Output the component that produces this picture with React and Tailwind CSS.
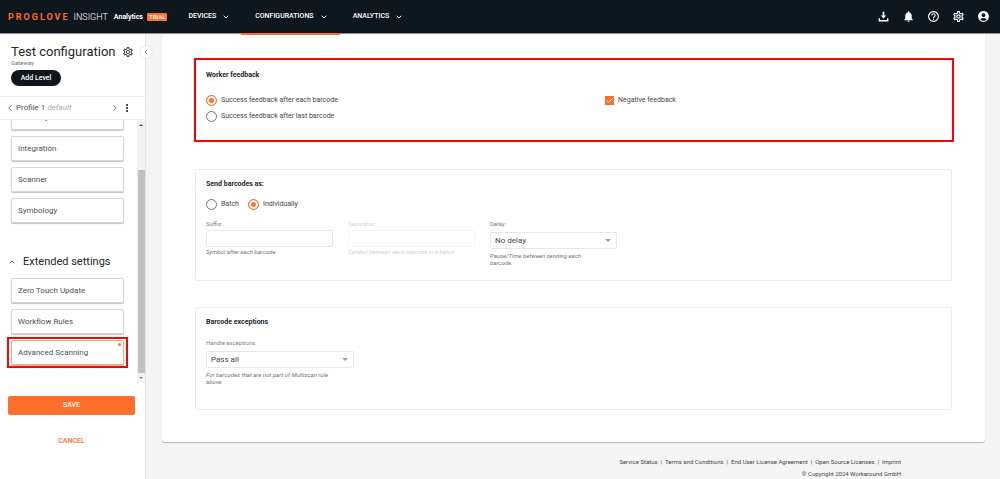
import { useState } from "react";
import {
  MdNotifications,
  MdHelpOutline,
  MdOutlineSettings,
  MdAccountCircle,
  MdMoreVert,
} from "react-icons/md";
import { FiChevronDown, FiChevronLeft, FiChevronRight, FiChevronUp } from "react-icons/fi";

const menus = ["DEVICES", "CONFIGURATIONS", "ANALYTICS"];
const baseSettings = ["Gateway", "Integration", "Scanner", "Symbology"];
const footerLinks = [
  "Service Status",
  "Terms and Conditions",
  "End User License Agreement",
  "Open Source Licenses",
  "Imprint",
];

function DownloadIcon() {
  return (
    <svg viewBox="0 0 24 24" className="size-[13px] fill-current">
      <path d="M10.5 3h3v7H17l-5 5.5L7 10h3.500z" />
      <path d="M3 15h2.500v3.500h13V15H21v6H3z" />
    </svg>
  );
}

function Header() {
  return (
    <header className="flex h-[34px] items-center border-b border-[#8b9096] bg-[#0e171e] pl-2 pr-[10px] text-white">
      <a href="#" className="flex items-center text-[9px] leading-3">
        <span className="font-bold tracking-[2px] text-[#ff6f2c]">PROGLOVE</span>
        <span className="ml-1 font-light">INSIGHT</span>
      </a>
      <span className="ml-[6px] text-[7px] font-bold leading-3">Analytics</span>
      <span className="ml-1 rounded-[1px] bg-[#ff6f2c] px-[2px] text-[6px] font-medium leading-2">TRIAL</span>
      <nav className="ml-[21px] flex h-full">
        {menus.map((menu) => (
          <button
            key={menu}
            type="button"
            className="relative mr-[25px] flex items-center gap-[6px] text-[7px] font-medium"
          >
            {menu}
            <FiChevronDown size={8} strokeWidth={3} />
            {menu === "CONFIGURATIONS" && (
              <span className="absolute -bottom-[2px] -left-[14px] -right-3 h-[2px] bg-[#ff6f2c]" />
            )}
          </button>
        ))}
      </nav>
      <div className="ml-auto flex items-center gap-3">
        <button type="button" aria-label="Downloads"><DownloadIcon /></button>
        <button type="button" aria-label="Notifications"><MdNotifications size={13} /></button>
        <button type="button" aria-label="Help"><MdHelpOutline size={13} /></button>
        <button type="button" aria-label="Settings"><MdOutlineSettings size={13} /></button>
        <button type="button" aria-label="Account"><MdAccountCircle size={13} /></button>
      </div>
    </header>
  );
}

function SettingCard({ label, active }) {
  return (
    <div className="relative">
      <button
        type="button"
        className={`block h-[25px] w-full rounded-[2px] border bg-white pl-[6px] text-left text-[8px] text-[#4b5157] shadow-[0_1px_1px_rgba(0,0,0,0.25)] ${
          active ? "border-[#f5a57c]" : "border-[#d4d6d8]"
        }`}
      >
        {label}
      </button>
      {active && (
        <>
          <span className="absolute right-[3px] top-[3px] size-[3px] rounded-full bg-[#ff6f2c]" />
          <span className="pointer-events-none absolute -inset-x-1 -inset-y-[3px] border-2 border-[#fe0000]" />
        </>
      )}
    </div>
  );
}

function Sidebar() {
  return (
    <aside className="relative flex w-[146px] shrink-0 flex-col border-r border-[#e3e3e3] bg-white">
      <div className="flex flex-col px-[11px] pt-[11px]">
        <div className="flex items-center justify-between">
          <h1 className="text-[13px] leading-[14px] text-[#20272d]">Test configuration</h1>
          <button type="button" aria-label="Configuration settings" className="text-[#3f464c]">
            <MdOutlineSettings size={12} />
          </button>
        </div>
        <span className="text-[6px] leading-2 text-[#6d7378]">Gateway</span>
        <button
          type="button"
          className="mt-[3px] h-4 w-[50px] rounded-full bg-[#0e171e] text-[7px] font-medium text-white"
        >
          Add Level
        </button>
      </div>
      <button
        type="button"
        aria-label="Collapse sidebar"
        className="absolute -right-[7px] top-3 flex size-3 items-center justify-center rounded-full bg-white text-[#3f464c] shadow-[0_0_1px_rgba(0,0,0,0.3)]"
      >
        <FiChevronLeft size={8} />
      </button>

      <div className="mt-[10px] flex h-6 items-center border-y border-[#ececec] pl-[5px] pr-3 text-[#4b5157]">
        <button type="button" aria-label="Previous profile"><FiChevronLeft size={10} /></button>
        <span className="ml-px text-[8px]">
          Profile 1 <i className="text-[#a5a9ac]">default</i>
        </span>
        <button type="button" aria-label="Next profile" className="ml-auto"><FiChevronRight size={10} /></button>
        <button type="button" aria-label="More" className="ml-px text-[#20272d]"><MdMoreVert size={12} /></button>
      </div>

      <div className="flex h-[263px] overflow-hidden">
        <div className="-mt-[15px] flex-1 pl-[11px] pr-[13px]">
          <div className="flex flex-col gap-[6px]">
            {baseSettings.map((label) => (
              <SettingCard key={label} label={label} />
            ))}
          </div>
          <h2 className="-ml-[3px] mb-2 mt-[31px] flex items-center gap-[7px] text-[11px] leading-4 text-[#20272d]">
            <FiChevronUp size={8} />
            Extended settings
          </h2>
          <div className="flex flex-col gap-[6px]">
            <SettingCard label="Zero Touch Update" />
            <SettingCard label="Workflow Rules" />
            <SettingCard label="Advanced Scanning" active />
          </div>
        </div>
        <div className="flex w-2 flex-col items-center bg-[#f1f1f1]">
          <svg viewBox="0 0 4 2" className="mb-11 mt-1 h-[2px] w-1 shrink-0 fill-[#505050]"><path d="M0 2L2 0l2 2z" /></svg>
          <div className="w-[7px] flex-1 bg-[#c1c1c1]" />
          <svg viewBox="0 0 4 2" className="my-1 h-[2px] w-1 shrink-0 fill-[#808080]"><path d="M0 0l2 2 2-2z" /></svg>
        </div>
      </div>

      <div className="mt-[13px] flex flex-col items-center gap-[19px] pl-2 pr-[10px]">
        <button type="submit" className="h-[19px] w-full rounded-[2px] bg-[#ff6f2c] text-[7px] font-medium text-white">
          SAVE
        </button>
        <button type="button" className="px-2 text-[7px] font-medium leading-[14px] text-[#ff6f2c]">
          CANCEL
        </button>
      </div>
    </aside>
  );
}

function Radio({ name, label, checked, onChange }) {
  return (
    <label className="flex items-center gap-1 text-[7px] leading-4 text-[#3f464c]">
      <input
        type="radio"
        name={name}
        checked={checked}
        onChange={onChange}
        className="size-[11px] appearance-none rounded-full border border-[#6d7378] bg-white checked:border-[#ff6f2c] checked:bg-[#ff6f2c] checked:shadow-[inset_0_0_0_2px_white]"
      />
      {label}
    </label>
  );
}

function SelectField({ id, label, hint, options, className }) {
  return (
    <div className={className}>
      <label htmlFor={id} className="block text-[6px] leading-2 text-[#7d8388]">{label}</label>
      <div className="relative mt-1">
        <select
          id={id}
          className="block h-[17px] w-full appearance-none rounded-[2px] border border-[#e6e7e8] bg-white pl-1 text-[8px] leading-[15px] text-[#3f464c]"
        >
          {options.map((option) => (
            <option key={option}>{option}</option>
          ))}
        </select>
        <svg viewBox="0 0 6 3" className="pointer-events-none absolute right-[6px] top-[7px] h-[3px] w-[6px] fill-[#9a9ea2]">
          <path d="M0 0h6L3 3z" />
        </svg>
      </div>
      <p className="mt-[3px] pr-5 text-[6px] italic leading-[7px] text-[#6d7378]">{hint}</p>
    </div>
  );
}

function TextField({ id, label, hint, disabled }) {
  return (
    <div className={`w-[127px] ${disabled ? "opacity-35" : ""}`}>
      <label htmlFor={id} className="block text-[6px] leading-2 text-[#7d8388]">{label}</label>
      <input
        id={id}
        type="text"
        disabled={disabled}
        className="mt-[2px] block h-[17px] w-full rounded-[2px] border border-[#e6e7e8] bg-white px-1 text-[8px]"
      />
      <p className="mt-px text-[6px] italic leading-2 text-[#6d7378]">{hint}</p>
    </div>
  );
}

export default function App() {
  const [feedback, setFeedback] = useState("each");
  const [sendAs, setSendAs] = useState("individually");
  const [negative, setNegative] = useState(true);

  return (
    <div className="flex min-h-screen flex-col bg-[#f4f4f4] font-[Roboto,sans-serif]">
      <Header />
      <div className="flex flex-1">
        <Sidebar />
        <div className="min-w-0 flex-1 pl-4 pr-[15px]">
          <main className="rounded-b-[3px] bg-white px-[33px] pb-8 pt-6 shadow-[0_1px_1px_rgba(0,0,0,0.25)]">
            <section className="-ml-px -mr-[2px] h-[84px] border-2 border-[#fe0000] px-[10px] pt-[11px]">
              <h3 className="text-[7px] font-bold leading-2 text-[#20272d]">Worker feedback</h3>
              <div className="mt-[13px] grid grid-cols-[399px_1fr] items-start">
                <div>
                  <Radio
                    name="feedback"
                    label="Success feedback after each barcode"
                    checked={feedback === "each"}
                    onChange={() => setFeedback("each")}
                  />
                  <Radio
                    name="feedback"
                    label="Success feedback after last barcode"
                    checked={feedback === "last"}
                    onChange={() => setFeedback("last")}
                  />
                </div>
                <label className="flex items-center gap-1 text-[7px] leading-4 text-[#3f464c]">
                  <span className="grid size-[9px]">
                    <input
                      type="checkbox"
                      checked={negative}
                      onChange={(e) => setNegative(e.target.checked)}
                      className="col-start-1 row-start-1 size-[9px] appearance-none border border-[#6d7378] checked:border-[#ff6f2c] checked:bg-[#ff6f2c]"
                    />
                    <svg viewBox="0 0 9 9" className="pointer-events-none col-start-1 row-start-1 fill-none stroke-white">
                      <path d="M1.8 4.6l1.8 1.8 3.6-3.6" />
                    </svg>
                  </span>
                  Negative feedback
                </label>
              </div>
            </section>

            <section className="mt-[27px] h-[112px] rounded-[2px] border border-[#ececec] px-[10px] pt-[10px]">
              <h3 className="text-[7px] font-bold leading-2 text-[#20272d]">Send barcodes as:</h3>
              <div className="mt-2 flex gap-[9px]">
                <Radio name="sendAs" label="Batch" checked={sendAs === "batch"} onChange={() => setSendAs("batch")} />
                <Radio
                  name="sendAs"
                  label="Individually"
                  checked={sendAs === "individually"}
                  onChange={() => setSendAs("individually")}
                />
              </div>
              <div className="mt-2 flex gap-[15px]">
                <TextField id="suffix" label="Suffix:" hint="Symbol after each barcode" />
                <TextField id="separator" label="Separator:" hint="Symbol between each barcode in a batch" disabled />
                <SelectField
                  id="delay"
                  label="Delay:"
                  hint="Pause/Time between sending each barcode."
                  options={["No delay", "100 ms", "500 ms"]}
                  className="w-[127px]"
                />
              </div>
            </section>

            <section className="mt-[26px] h-[103px] rounded-[2px] border border-[#ececec] px-[10px] pt-[10px]">
              <h3 className="text-[7px] font-bold leading-2 text-[#20272d]">Barcode exceptions</h3>
              <SelectField
                id="exceptions"
                label="Handle exceptions"
                hint="For barcodes that are not part of Multiscan rule above"
                options={["Pass all", "Block all"]}
                className="mt-[13px] w-[148px]"
              />
            </section>
          </main>

          <footer className="mt-[14px] pr-[84px] text-right text-[6px] leading-3 text-[#3f464c]">
            <div className="flex justify-end gap-[3px]">
              {footerLinks.map((link, i) => (
                <span key={link} className="flex gap-[3px]">
                  {i > 0 && <span>|</span>}
                  <a href="#">{link}</a>
                </span>
              ))}
            </div>
            <p>© Copyright 2024 Workaround GmbH</p>
          </footer>
        </div>
      </div>
    </div>
  );
}
